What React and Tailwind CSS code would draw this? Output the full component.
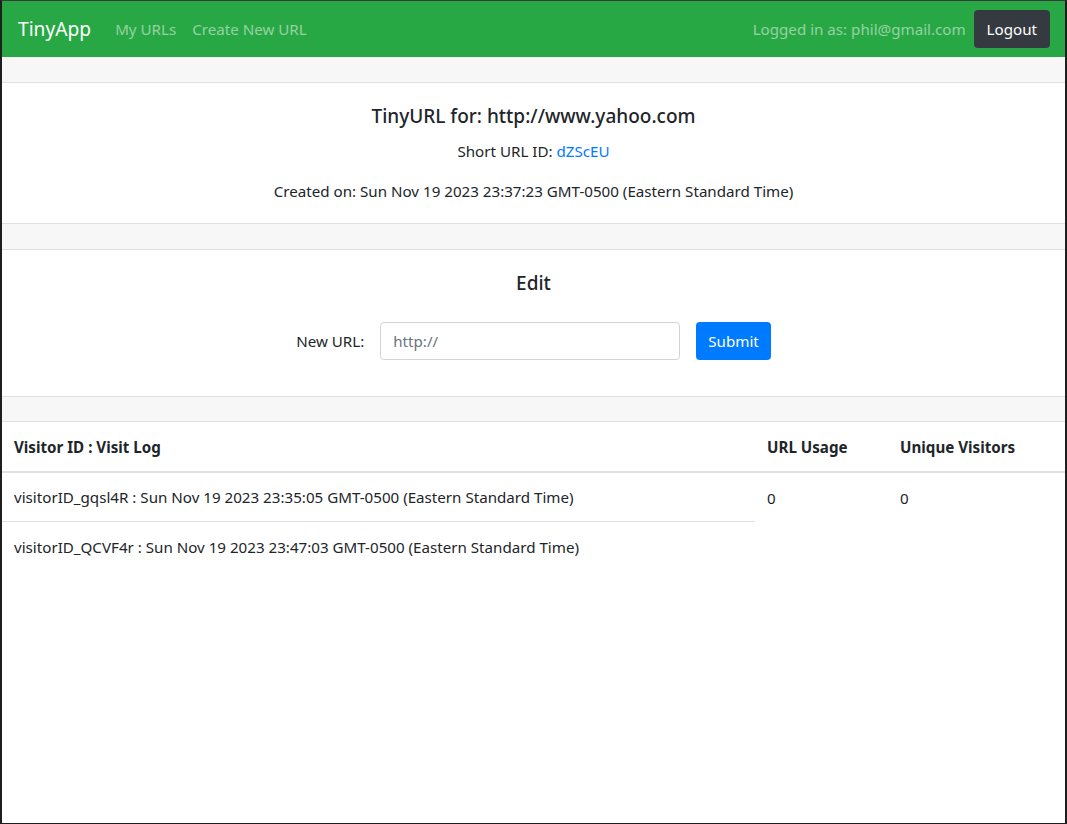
export default function App() {
  const font = { fontFamily: '"Noto Sans", "Open Sans", sans-serif' };
  return (
    <div
      style={font}
      className="box-border h-[824px] w-[1067px] overflow-hidden border-t border-b border-l-2 border-r-2 border-t-[#3a3a3a] border-b-[#1e1e1e] border-l-[#1e1e1e] border-r-[#1e1e1e] bg-white text-[15.15px] leading-6 text-[#212529]"
    >
      {/* Navbar */}
      <nav className="flex h-14 items-center justify-between bg-[#28a745] pl-4 pr-[15px]">
        <div className="flex items-center">
          <span className="mr-4 text-[19.2px] leading-[30px] text-white">TinyApp</span>
          <span className="px-2 text-white/50">My URLs</span>
          <span className="px-2 text-white/50">Create New URL</span>
        </div>
        <div className="flex items-center">
          <span className="mr-2 text-white/50">Logged in as: phil@gmail.com</span>
          <button className="h-[38px] rounded bg-[#343a40] px-[13px] text-white">Logout</button>
        </div>
      </nav>

      {/* Card 1 */}
      <div className="h-[26px] border-b border-[#dfdfdf] bg-[#f7f7f7]" />
      <div className="border-b border-[#dfdfdf] px-5 pt-[21px] pb-5 text-center">
        <h2 className="text-[19px] font-medium leading-6">TinyURL for: http://www.yahoo.com</h2>
        <p className="mt-[11px]">
          Short URL ID: <span className="text-[#007bff]">dZScEU</span>
        </p>
        <p className="mt-4">Created on: Sun Nov 19 2023 23:37:23 GMT-0500 (Eastern Standard Time)</p>
      </div>

      {/* Card 2 */}
      <div className="h-[26px] border-b border-[#dfdfdf] bg-[#f7f7f7]" />
      <div className="border-b border-[#dfdfdf] px-5 pt-[21px] pb-9 text-center">
        <h2 className="text-[19px] font-medium leading-6">Edit</h2>
        <div className="mt-[27px] flex items-center justify-center gap-4">
          <label>New URL:</label>
          <div className="flex h-[38px] w-[300px] items-center rounded border border-[#ced4da] px-3 text-left text-[#6c757d]">
            http://
          </div>
          <button className="h-[38px] rounded bg-[#007bff] px-3 text-white">Submit</button>
        </div>
      </div>

      {/* Table */}
      <div className="h-[25px] border-b border-[#dfdfdf] bg-[#f7f7f7]" />
      <div className="grid grid-cols-[753px_133px_1fr] border-b-2 border-[#dee2e6] font-bold">
        <div className="flex h-[49px] items-center px-3">Visitor ID : Visit Log</div>
        <div className="flex h-[49px] items-center px-3">URL Usage</div>
        <div className="flex h-[49px] items-center px-3">Unique Visitors</div>
      </div>
      <div className="grid grid-cols-[753px_133px_1fr]">
        <div>
          <div className="flex h-[49px] items-center border-b border-[#dee2e6] px-3">
            visitorID_gqsl4R : Sun Nov 19 2023 23:35:05 GMT-0500 (Eastern Standard Time)
          </div>
          <div className="flex h-[49px] items-center px-3">
            visitorID_QCVF4r : Sun Nov 19 2023 23:47:03 GMT-0500 (Eastern Standard Time)
          </div>
        </div>
        <div className="flex h-[49px] items-center px-3">0</div>
        <div className="flex h-[49px] items-center px-3">0</div>
      </div>
    </div>
  );
}
